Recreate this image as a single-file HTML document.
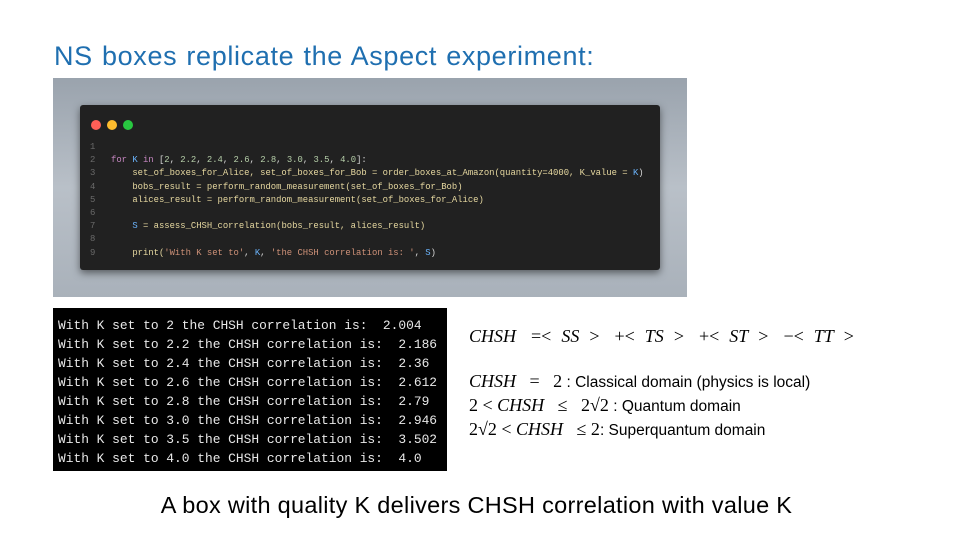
<!DOCTYPE html>
<html><head><meta charset="utf-8"><style>
body{margin:0;width:960px;height:540px;background:#fff;position:relative;overflow:hidden;font-family:"Liberation Sans",sans-serif}
.t{position:absolute;left:54px;top:41px;font-size:27px;color:#1f6fb0;letter-spacing:0.65px;word-spacing:1px}
.frame{position:absolute;left:53px;top:78px;width:634px;height:219px;background:linear-gradient(180deg,#9aa3ad,#b9c0c8 50%,#a9b1ba)}
.panel{position:absolute;left:80px;top:105px;width:580px;height:165px;background:#212121;border-radius:3px;box-shadow:0 3px 8px rgba(0,0,0,.5)}
.dot{position:absolute;top:15px;width:10px;height:10px;border-radius:50%}
.code{position:absolute;left:10px;top:36px;font-family:"Liberation Mono",monospace;font-size:8.9px;line-height:13.2px;color:#d8d8d8;white-space:pre}
.ln{color:#6a6a6a;display:inline-block;width:21px}
.k{color:#c586c0}.b{color:#6cb6ff}.n{color:#b5cea8}.s{color:#ce9178}.f{color:#e6d8a0}
.out{position:absolute;left:53px;top:308px;width:394px;height:163px;background:#000;color:#e8e8e8;font-family:"Liberation Mono",monospace;font-size:12.9px;line-height:19px;white-space:pre;padding:8px 0 0 5px;box-sizing:border-box}
.m{position:absolute;font-family:"Liberation Serif",serif;font-size:18px;color:#000;white-space:pre}
.i{font-style:italic}
.r{font-family:"Liberation Sans",sans-serif;font-size:15.5px}
.bot{position:absolute;left:0;width:953px;text-align:center;top:492px;font-size:23.5px;color:#000;letter-spacing:0.3px}
</style></head><body>
<div class="t">NS boxes replicate the Aspect experiment:</div>
<div class="frame"></div>
<div class="panel">
<div class="dot" style="left:11px;background:#ff5f57"></div>
<div class="dot" style="left:27px;background:#febc2e"></div>
<div class="dot" style="left:43px;background:#28c840"></div>
<div class="code"><span class="ln">1</span>
<span class="ln">2</span><span class="k">for</span> <span class="b">K</span> <span class="k">in</span> [<span class="n">2</span>, <span class="n">2.2</span>, <span class="n">2.4</span>, <span class="n">2.6</span>, <span class="n">2.8</span>, <span class="n">3.0</span>, <span class="n">3.5</span>, <span class="n">4.0</span>]:
<span class="ln">3</span>    <span class="f">set_of_boxes_for_Alice, set_of_boxes_for_Bob = order_boxes_at_Amazon(quantity=4000, K_value = </span><span class="b">K</span>)
<span class="ln">4</span>    <span class="f">bobs_result = perform_random_measurement(set_of_boxes_for_Bob)</span>
<span class="ln">5</span>    <span class="f">alices_result = perform_random_measurement(set_of_boxes_for_Alice)</span>
<span class="ln">6</span>
<span class="ln">7</span>    <span class="b">S</span> <span class="f">= assess_CHSH_correlation(bobs_result, alices_result)</span>
<span class="ln">8</span>
<span class="ln">9</span>    <span class="f">print(</span><span class="s">'With K set to'</span>, <span class="b">K</span>, <span class="s">'the CHSH correlation is: '</span>, <span class="b">S</span>)</div>
</div>
<div class="out">With K set to 2 the CHSH correlation is:  2.004
With K set to 2.2 the CHSH correlation is:  2.186
With K set to 2.4 the CHSH correlation is:  2.36
With K set to 2.6 the CHSH correlation is:  2.612
With K set to 2.8 the CHSH correlation is:  2.79
With K set to 3.0 the CHSH correlation is:  2.946
With K set to 3.5 the CHSH correlation is:  3.502
With K set to 4.0 the CHSH correlation is:  4.0</div>
<div class="m" style="left:469px;top:326px;word-spacing:0.5px"><span class="i">CHSH</span>   =&lt;  <span class="i">SS</span>  &gt;   +&lt;  <span class="i">TS</span>  &gt;   +&lt;  <span class="i">ST</span>  &gt;   −&lt;  <span class="i">TT</span>  &gt;</div>
<div class="m" style="left:469px;top:371px"><span class="i">CHSH</span>   =   2<span class="r"> : Classical domain (physics is local)</span></div>
<div class="m" style="left:469px;top:395px">2 &lt; <span class="i">CHSH</span>   ≤   2√2<span class="r"> : Quantum domain</span></div>
<div class="m" style="left:469px;top:419px">2√2 &lt; <span class="i">CHSH</span>   ≤ 2<span class="r">: Superquantum domain</span></div>
<div class="bot">A box with quality K delivers CHSH correlation with value K</div>
</body></html>
